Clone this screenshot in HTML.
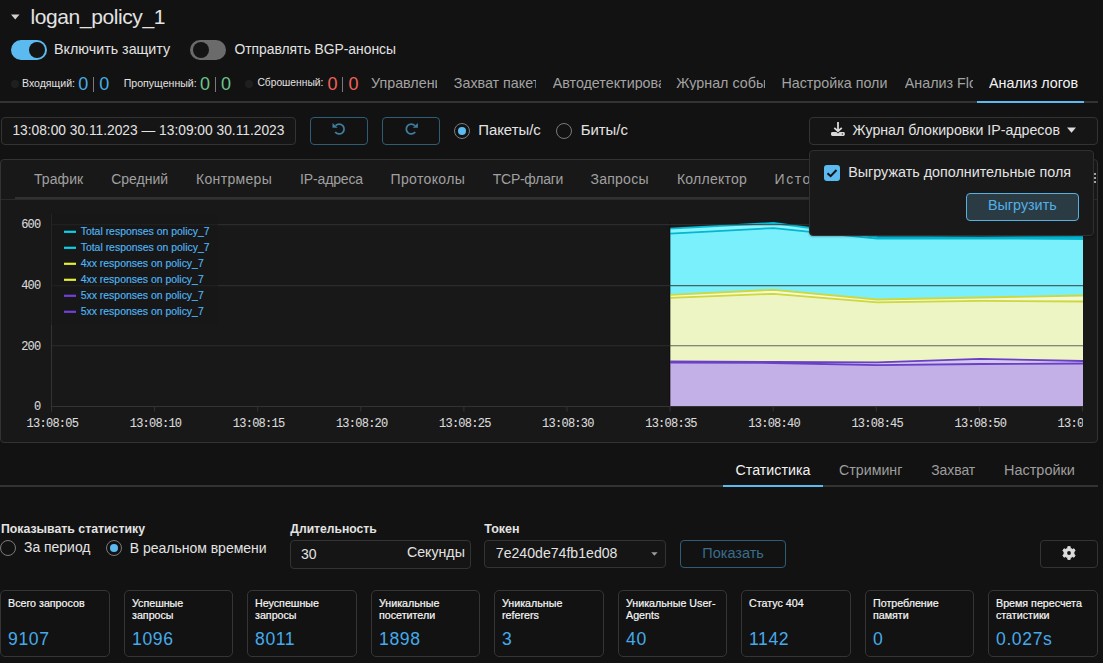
<!DOCTYPE html>
<html><head><meta charset="utf-8"><style>
html,body{margin:0;padding:0;width:1103px;height:663px;overflow:hidden;background:#121212;font-family:'Liberation Sans', sans-serif;}
.t{position:absolute;white-space:nowrap;line-height:1;}
</style></head><body>
<svg style="position:absolute;left:10px;top:13px" width="11" height="8"><path d="M1 1.5 L9.5 1.5 L5.25 6.5 Z" fill="#cfcfcf"/></svg>
<div class="t" style="left:30.5px;top:6.22px;font-size:21px;color:#e3e3e3;font-weight:normal;font-family:'Liberation Sans', sans-serif;letter-spacing:-0.401px;">logan_policy_1</div>
<div style="position:absolute;left:11px;top:40px;width:36px;height:20px;box-sizing:border-box;background:#5bbbf0;border-radius:10px"></div>
<div style="position:absolute;left:29px;top:42px;width:16px;height:16px;box-sizing:border-box;background:#141414;border-radius:50%"></div>
<div class="t" style="left:54px;top:41.70px;font-size:14.3px;color:#e3e3e3;font-weight:normal;font-family:'Liberation Sans', sans-serif;">Включить защиту</div>
<div style="position:absolute;left:190px;top:40px;width:36px;height:20px;box-sizing:border-box;background:#6b6b6b;border-radius:10px"></div>
<div style="position:absolute;left:193px;top:42px;width:16px;height:16px;box-sizing:border-box;background:#141414;border-radius:50%"></div>
<div class="t" style="left:234.5px;top:42.88px;font-size:13.85px;color:#e3e3e3;font-weight:normal;font-family:'Liberation Sans', sans-serif;">Отправлять BGP-анонсы</div>
<div style="position:absolute;left:11px;top:79.5px;width:8px;height:8px;box-sizing:border-box;background:#1f1f1f;border-radius:50%"></div>
<div class="t" style="left:22px;top:78.07px;font-size:10.55px;color:#e3e3e3;font-weight:normal;font-family:'Liberation Sans', sans-serif;">Входящий:</div>
<div class="t" style="left:78.2px;top:74.86px;font-size:18px;color:#46aee6;font-weight:normal;font-family:'Liberation Sans', sans-serif;">0</div>
<div style="position:absolute;left:92.9px;top:76.5px;width:1.3px;height:15.5px;box-sizing:border-box;background:#7a7a7a"></div>
<div class="t" style="left:99.2px;top:74.86px;font-size:18px;color:#46aee6;font-weight:normal;font-family:'Liberation Sans', sans-serif;">0</div>
<div class="t" style="left:123.7px;top:78.04px;font-size:10.58px;color:#e3e3e3;font-weight:normal;font-family:'Liberation Sans', sans-serif;">Пропущенный:</div>
<div class="t" style="left:200.1px;top:74.86px;font-size:18px;color:#6cc48c;font-weight:normal;font-family:'Liberation Sans', sans-serif;">0</div>
<div style="position:absolute;left:214.8px;top:76.5px;width:1.3px;height:15.5px;box-sizing:border-box;background:#7a7a7a"></div>
<div class="t" style="left:221.1px;top:74.86px;font-size:18px;color:#6cc48c;font-weight:normal;font-family:'Liberation Sans', sans-serif;">0</div>
<div style="position:absolute;left:245px;top:79.5px;width:8px;height:8px;box-sizing:border-box;background:#1f1f1f;border-radius:50%"></div>
<div class="t" style="left:257.4px;top:78.31px;font-size:10.27px;color:#e3e3e3;font-weight:normal;font-family:'Liberation Sans', sans-serif;">Сброшенный:</div>
<div class="t" style="left:327.5px;top:74.86px;font-size:18px;color:#ef625a;font-weight:normal;font-family:'Liberation Sans', sans-serif;">0</div>
<div style="position:absolute;left:342.2px;top:76.5px;width:1.3px;height:15.5px;box-sizing:border-box;background:#7a7a7a"></div>
<div class="t" style="left:348.5px;top:74.86px;font-size:18px;color:#ef625a;font-weight:normal;font-family:'Liberation Sans', sans-serif;">0</div>
<div class="t" style="left:371px;top:75.90px;font-size:14.3px;color:#a3a3a3;font-weight:normal;font-family:'Liberation Sans', sans-serif;width:66px;overflow:hidden">Управление</div>
<div class="t" style="left:453.8px;top:75.90px;font-size:14.3px;color:#a3a3a3;font-weight:normal;font-family:'Liberation Sans', sans-serif;width:82px;overflow:hidden">Захват пакетов</div>
<div class="t" style="left:552.7px;top:75.90px;font-size:14.3px;color:#a3a3a3;font-weight:normal;font-family:'Liberation Sans', sans-serif;width:108px;overflow:hidden">Автодетектирование</div>
<div class="t" style="left:676.3px;top:75.90px;font-size:14.3px;color:#a3a3a3;font-weight:normal;font-family:'Liberation Sans', sans-serif;width:89px;overflow:hidden">Журнал событий</div>
<div class="t" style="left:781.4px;top:75.90px;font-size:14.3px;color:#a3a3a3;font-weight:normal;font-family:'Liberation Sans', sans-serif;width:106px;overflow:hidden">Настройка политики</div>
<div class="t" style="left:904.8px;top:75.90px;font-size:14.3px;color:#a3a3a3;font-weight:normal;font-family:'Liberation Sans', sans-serif;width:68px;overflow:hidden">Анализ Flow</div>
<div class="t" style="left:989px;top:75.90px;font-size:14.3px;color:#f2f2f2;font-weight:normal;font-family:'Liberation Sans', sans-serif;width:95px;overflow:hidden">Анализ логов</div>
<div style="position:absolute;left:0px;top:101px;width:1098px;height:2px;box-sizing:border-box;background:#333"></div>
<div style="position:absolute;left:977px;top:101px;width:107px;height:2px;box-sizing:border-box;background:#5bbbf0"></div>
<div style="position:absolute;left:1px;top:117px;width:295px;height:28px;box-sizing:border-box;border:1px solid #333;border-radius:4px;background:#151515"></div>
<div class="t" style="left:12.4px;top:123.54px;font-size:13.77px;color:#e3e3e3;font-weight:normal;font-family:'Liberation Sans', sans-serif;">13:08:00 30.11.2023 — 13:09:00 30.11.2023</div>
<div style="position:absolute;left:310px;top:117px;width:58px;height:28px;box-sizing:border-box;border:1px solid #2f5d75;border-radius:4px"></div>
<div style="position:absolute;left:382px;top:117px;width:58px;height:28px;box-sizing:border-box;border:1px solid #2f5d75;border-radius:4px"></div>
<svg style="position:absolute;left:328px;top:119px" width="20" height="20" viewBox="0 0 20 20"><path d="M7.6 6.7 A4.9 4.9 0 1 1 7.2 12.9" fill="none" stroke="#3f7d9f" stroke-width="1.75"/><path d="M4.5 3.9 L4.5 8.7 L9.7 8.7 Z" fill="#3f7d9f"/></svg>
<svg style="position:absolute;left:400px;top:119px" width="20" height="20" viewBox="0 0 20 20"><g transform="translate(22.4,0) scale(-1,1)"><path d="M7.6 6.7 A4.9 4.9 0 1 1 7.2 12.9" fill="none" stroke="#3f7d9f" stroke-width="1.75"/><path d="M4.5 3.9 L4.5 8.7 L9.7 8.7 Z" fill="#3f7d9f"/></g></svg>
<div style="position:absolute;left:454px;top:123px;width:16px;height:16px;box-sizing:border-box;border:1.5px solid #7a7a7a;border-radius:50%"></div>
<div style="position:absolute;left:458px;top:127px;width:8px;height:8px;box-sizing:border-box;background:#5bbbf0;border-radius:50%"></div>
<div class="t" style="left:478.2px;top:123.39px;font-size:14.9px;color:#e3e3e3;font-weight:normal;font-family:'Liberation Sans', sans-serif;">Пакеты/с</div>
<div style="position:absolute;left:556px;top:123px;width:16px;height:16px;box-sizing:border-box;border:1.5px solid #7a7a7a;border-radius:50%"></div>
<div class="t" style="left:580.7px;top:123.39px;font-size:14.9px;color:#e3e3e3;font-weight:normal;font-family:'Liberation Sans', sans-serif;">Биты/с</div>
<div style="position:absolute;left:809px;top:117px;width:289px;height:28px;box-sizing:border-box;border:1px solid #333;border-radius:4px;background:#151515"></div>
<svg style="position:absolute;left:826px;top:118px" width="24" height="24" viewBox="0 0 24 24"><rect x="5" y="14" width="13.8" height="3.9" rx="1.4" fill="#d9d9d9"/><path d="M8.3 9.9 L12 13.2 L15.8 9.9" fill="none" stroke="#121212" stroke-width="3.4"/><path d="M12 4 V12.4 M8.3 9.9 L12 13.2 L15.8 9.9" fill="none" stroke="#d9d9d9" stroke-width="1.8"/><circle cx="16.4" cy="15.9" r="0.75" fill="#333"/></svg>
<div class="t" style="left:852.6px;top:123.01px;font-size:14.17px;color:#e3e3e3;font-weight:normal;font-family:'Liberation Sans', sans-serif;">Журнал блокировки IP-адресов</div>
<svg style="position:absolute;left:1066px;top:127px" width="12" height="8"><path d="M1 0.4 L10 0.4 L5.5 5.7 Z" fill="#dcdcdc"/></svg>
<div style="position:absolute;left:0px;top:159px;width:1098px;height:284px;box-sizing:border-box;border:1px solid #333;border-radius:4px;background:#181818"></div>
<div class="t" style="left:34.0px;top:172.15px;font-size:14px;color:#a0a0a0;font-weight:normal;font-family:'Liberation Sans', sans-serif;letter-spacing:0.081px;">Трафик</div>
<div class="t" style="left:111.2px;top:172.15px;font-size:14px;color:#a0a0a0;font-weight:normal;font-family:'Liberation Sans', sans-serif;letter-spacing:-0.017px;">Средний</div>
<div class="t" style="left:196.0px;top:172.15px;font-size:14px;color:#a0a0a0;font-weight:normal;font-family:'Liberation Sans', sans-serif;letter-spacing:0.329px;">Контрмеры</div>
<div class="t" style="left:300.1px;top:172.15px;font-size:14px;color:#a0a0a0;font-weight:normal;font-family:'Liberation Sans', sans-serif;letter-spacing:-0.145px;">IP-адреса</div>
<div class="t" style="left:390.5px;top:172.15px;font-size:14px;color:#a0a0a0;font-weight:normal;font-family:'Liberation Sans', sans-serif;letter-spacing:0.358px;">Протоколы</div>
<div class="t" style="left:492.8px;top:172.15px;font-size:14px;color:#a0a0a0;font-weight:normal;font-family:'Liberation Sans', sans-serif;letter-spacing:-0.285px;">TCP-флаги</div>
<div class="t" style="left:590.5px;top:172.15px;font-size:14px;color:#a0a0a0;font-weight:normal;font-family:'Liberation Sans', sans-serif;letter-spacing:0.247px;">Запросы</div>
<div class="t" style="left:676.9px;top:172.15px;font-size:14px;color:#a0a0a0;font-weight:normal;font-family:'Liberation Sans', sans-serif;letter-spacing:0.258px;">Коллектор</div>
<div class="t" style="left:774.6px;top:172.15px;font-size:14px;color:#a0a0a0;font-weight:normal;font-family:'Liberation Sans', sans-serif;letter-spacing:1.490px;">Источники</div>
<div style="position:absolute;left:1px;top:199px;width:1096px;height:1px;box-sizing:border-box;background:#2a2a2a"></div>
<div style="position:absolute;left:15px;top:197px;width:1078px;height:2px;box-sizing:border-box;background:#313131"></div>
<svg style="position:absolute;left:0;top:0" width="1103" height="663" viewBox="0 0 1103 663"><defs><clipPath id="pc"><rect x="52" y="160" width="1031" height="260"/></clipPath></defs><g clip-path="url(#pc)"><polygon points="670.2,228.7 773.5,223 877.2,237 980.3,237.3 1084,237 1084,239 980.3,238.5 877.2,238.6 773.5,228.1 670.2,233.6" fill="#8af4fe"/><polygon points="670.2,233.6 773.5,228.1 877.2,238.6 980.3,238.5 1084,239 1084,295.5 980.3,297.5 877.2,299.5 773.5,289.8 670.2,294.8" fill="#7af0fc"/><polygon points="670.2,294.8 773.5,289.8 877.2,299.5 980.3,297.5 1084,295.5 1084,301.5 980.3,300.8 877.2,302.3 773.5,293.8 670.2,297.8" fill="#f4f8d8"/><polygon points="670.2,297.8 773.5,293.8 877.2,302.3 980.3,300.8 1084,301.5 1084,361 980.3,358.8 877.2,362.3 773.5,362 670.2,361.3" fill="#eef5c4"/><polygon points="670.2,361.3 773.5,362 877.2,362.3 980.3,358.8 1084,361 1084,363.5 980.3,364 877.2,365.2 773.5,363 670.2,362.6" fill="#d2c6ee"/><polygon points="670.2,362.6 773.5,363 877.2,365.2 980.3,364 1084,363.5 1084,406.5 670.2,406.5" fill="#c2b0e6"/><polyline points="670.2,228.7 773.5,223 877.2,237 980.3,237.3 1084,237" fill="none" stroke="#06bcd6" stroke-width="1.8"/><polyline points="670.2,233.6 773.5,228.1 877.2,238.6 980.3,238.5 1084,239" fill="none" stroke="#06b6d0" stroke-width="1.8"/><polyline points="670.2,294.8 773.5,289.8 877.2,299.5 980.3,297.5 1084,295.5" fill="none" stroke="#cdd83c" stroke-width="1.8"/><polyline points="670.2,297.8 773.5,293.8 877.2,302.3 980.3,300.8 1084,301.5" fill="none" stroke="#cdd83c" stroke-width="1.8"/><polyline points="670.2,361.3 773.5,362 877.2,362.3 980.3,358.8 1084,361" fill="none" stroke="#6a40c6" stroke-width="1.8"/><polyline points="670.2,362.6 773.5,363 877.2,365.2 980.3,364 1084,363.5" fill="none" stroke="#6a40c6" stroke-width="1.8"/><line x1="669.7" y1="222" x2="669.7" y2="406.5" stroke="#101010" stroke-width="1"/></g><line x1="52" y1="224.6" x2="1083" y2="224.6" stroke="#333" stroke-opacity="0.75" stroke-width="1.1"/><line x1="52" y1="285.6" x2="1083" y2="285.6" stroke="#333" stroke-opacity="0.75" stroke-width="1.1"/><line x1="52" y1="345.8" x2="1083" y2="345.8" stroke="#333" stroke-opacity="0.75" stroke-width="1.1"/><line x1="51.5" y1="214" x2="51.5" y2="411.5" stroke="#333" stroke-width="1"/><line x1="52" y1="406.5" x2="1083" y2="406.5" stroke="#333" stroke-width="1"/><line x1="51.5" y1="406.5" x2="51.5" y2="411.5" stroke="#333" stroke-width="1"/><line x1="154.6" y1="406.5" x2="154.6" y2="411.5" stroke="#333" stroke-width="1"/><line x1="257.7" y1="406.5" x2="257.7" y2="411.5" stroke="#333" stroke-width="1"/><line x1="360.8" y1="406.5" x2="360.8" y2="411.5" stroke="#333" stroke-width="1"/><line x1="463.9" y1="406.5" x2="463.9" y2="411.5" stroke="#333" stroke-width="1"/><line x1="567.0" y1="406.5" x2="567.0" y2="411.5" stroke="#333" stroke-width="1"/><line x1="670.1" y1="406.5" x2="670.1" y2="411.5" stroke="#333" stroke-width="1"/><line x1="773.2" y1="406.5" x2="773.2" y2="411.5" stroke="#333" stroke-width="1"/><line x1="876.3" y1="406.5" x2="876.3" y2="411.5" stroke="#333" stroke-width="1"/><line x1="979.4" y1="406.5" x2="979.4" y2="411.5" stroke="#333" stroke-width="1"/><line x1="1082.5" y1="406.5" x2="1082.5" y2="411.5" stroke="#333" stroke-width="1"/><rect x="50" y="214" width="168" height="111" fill="#181818" fill-opacity="0.55"/><rect x="64" y="230.7" width="12" height="2.2" fill="#0cd0e8"/><rect x="64" y="246.7" width="12" height="2.2" fill="#0cd0e8"/><rect x="64" y="262.7" width="12" height="2.2" fill="#e4ec3c"/><rect x="64" y="278.7" width="12" height="2.2" fill="#e4ec3c"/><rect x="64" y="294.7" width="12" height="2.2" fill="#7040d8"/><rect x="64" y="310.7" width="12" height="2.2" fill="#7040d8"/></svg>
<div class="t" style="left:80.7px;top:227.15px;font-size:10.45px;color:#50b5f4;font-weight:normal;font-family:'Liberation Sans', sans-serif;-webkit-text-stroke:0.15px #50b5f4">Total responses on policy_7</div>
<div class="t" style="left:80.7px;top:243.15px;font-size:10.45px;color:#50b5f4;font-weight:normal;font-family:'Liberation Sans', sans-serif;-webkit-text-stroke:0.15px #50b5f4">Total responses on policy_7</div>
<div class="t" style="left:80.7px;top:259.15px;font-size:10.45px;color:#50b5f4;font-weight:normal;font-family:'Liberation Sans', sans-serif;-webkit-text-stroke:0.15px #50b5f4">4xx responses on policy_7</div>
<div class="t" style="left:80.7px;top:275.15px;font-size:10.45px;color:#50b5f4;font-weight:normal;font-family:'Liberation Sans', sans-serif;-webkit-text-stroke:0.15px #50b5f4">4xx responses on policy_7</div>
<div class="t" style="left:80.7px;top:291.15px;font-size:10.45px;color:#50b5f4;font-weight:normal;font-family:'Liberation Sans', sans-serif;-webkit-text-stroke:0.15px #50b5f4">5xx responses on policy_7</div>
<div class="t" style="left:80.7px;top:307.15px;font-size:10.45px;color:#50b5f4;font-weight:normal;font-family:'Liberation Sans', sans-serif;-webkit-text-stroke:0.15px #50b5f4">5xx responses on policy_7</div>
<div class="t" style="left:0px;width:40.5px;text-align:right;top:219.31px;font-size:12px;letter-spacing:-0.75px;color:#dadada;font-family:'Liberation Mono', monospace;-webkit-text-stroke:0.1px #dadada">600</div>
<div class="t" style="left:0px;width:40.5px;text-align:right;top:280.21px;font-size:12px;letter-spacing:-0.75px;color:#dadada;font-family:'Liberation Mono', monospace;-webkit-text-stroke:0.1px #dadada">400</div>
<div class="t" style="left:0px;width:40.5px;text-align:right;top:340.61px;font-size:12px;letter-spacing:-0.75px;color:#dadada;font-family:'Liberation Mono', monospace;-webkit-text-stroke:0.1px #dadada">200</div>
<div class="t" style="left:0px;width:40.5px;text-align:right;top:401.11px;font-size:12px;letter-spacing:-0.75px;color:#dadada;font-family:'Liberation Mono', monospace;-webkit-text-stroke:0.1px #dadada">0</div>
<div style="position:absolute;left:0;top:412px;width:1083px;height:22px;overflow:hidden"><div class="t" style="left:12.4px;width:80px;text-align:center;top:5.91px;font-size:12px;letter-spacing:-0.75px;color:#dadada;font-family:'Liberation Mono', monospace;-webkit-text-stroke:0.1px #dadada">13:08:05</div><div class="t" style="left:115.5px;width:80px;text-align:center;top:5.91px;font-size:12px;letter-spacing:-0.75px;color:#dadada;font-family:'Liberation Mono', monospace;-webkit-text-stroke:0.1px #dadada">13:08:10</div><div class="t" style="left:218.6px;width:80px;text-align:center;top:5.91px;font-size:12px;letter-spacing:-0.75px;color:#dadada;font-family:'Liberation Mono', monospace;-webkit-text-stroke:0.1px #dadada">13:08:15</div><div class="t" style="left:321.7px;width:80px;text-align:center;top:5.91px;font-size:12px;letter-spacing:-0.75px;color:#dadada;font-family:'Liberation Mono', monospace;-webkit-text-stroke:0.1px #dadada">13:08:20</div><div class="t" style="left:424.8px;width:80px;text-align:center;top:5.91px;font-size:12px;letter-spacing:-0.75px;color:#dadada;font-family:'Liberation Mono', monospace;-webkit-text-stroke:0.1px #dadada">13:08:25</div><div class="t" style="left:527.9px;width:80px;text-align:center;top:5.91px;font-size:12px;letter-spacing:-0.75px;color:#dadada;font-family:'Liberation Mono', monospace;-webkit-text-stroke:0.1px #dadada">13:08:30</div><div class="t" style="left:631.0px;width:80px;text-align:center;top:5.91px;font-size:12px;letter-spacing:-0.75px;color:#dadada;font-family:'Liberation Mono', monospace;-webkit-text-stroke:0.1px #dadada">13:08:35</div><div class="t" style="left:734.1px;width:80px;text-align:center;top:5.91px;font-size:12px;letter-spacing:-0.75px;color:#dadada;font-family:'Liberation Mono', monospace;-webkit-text-stroke:0.1px #dadada">13:08:40</div><div class="t" style="left:837.2px;width:80px;text-align:center;top:5.91px;font-size:12px;letter-spacing:-0.75px;color:#dadada;font-family:'Liberation Mono', monospace;-webkit-text-stroke:0.1px #dadada">13:08:45</div><div class="t" style="left:940.3px;width:80px;text-align:center;top:5.91px;font-size:12px;letter-spacing:-0.75px;color:#dadada;font-family:'Liberation Mono', monospace;-webkit-text-stroke:0.1px #dadada">13:08:50</div><div class="t" style="left:1043.4px;width:80px;text-align:center;top:5.91px;font-size:12px;letter-spacing:-0.75px;color:#dadada;font-family:'Liberation Mono', monospace;-webkit-text-stroke:0.1px #dadada">13:08:55</div></div>
<div style="position:absolute;left:1094px;top:172.7px;width:2px;height:2px;box-sizing:border-box;background:#a8a8a8"></div>
<div style="position:absolute;left:1094px;top:177.1px;width:2px;height:2px;box-sizing:border-box;background:#a8a8a8"></div>
<div style="position:absolute;left:1094px;top:181.4px;width:2px;height:2px;box-sizing:border-box;background:#a8a8a8"></div>
<div style="position:absolute;left:809px;top:150px;width:285px;height:86px;box-sizing:border-box;background:#191919;border:1px solid #303030;border-radius:4px;box-shadow:0 1px 2px rgba(0,0,0,0.25)"></div>
<div style="position:absolute;left:824px;top:165px;width:16px;height:16px;box-sizing:border-box;background:#5bbbf0;border-radius:3px"></div>
<svg style="position:absolute;left:824px;top:165px" width="16" height="16"><path d="M3.5 8.2 L6.6 11.2 L12.5 5" fill="none" stroke="#111" stroke-width="2"/></svg>
<div class="t" style="left:848.2px;top:165.17px;font-size:14.33px;color:#e3e3e3;font-weight:normal;font-family:'Liberation Sans', sans-serif;">Выгружать дополнительные поля</div>
<div style="position:absolute;left:966px;top:193px;width:113px;height:28px;box-sizing:border-box;background:#2b3b44;border:1px solid #56b0e0;border-radius:4px"></div>
<div class="t" style="left:988px;top:198.46px;font-size:14.34px;color:#52b0e8;font-weight:normal;font-family:'Liberation Sans', sans-serif;">Выгрузить</div>
<div class="t" style="left:735.6px;top:463.25px;font-size:14.24px;color:#f2f2f2;font-weight:normal;font-family:'Liberation Sans', sans-serif;">Статистика</div>
<div class="t" style="left:839.1px;top:463.28px;font-size:14.2px;color:#9e9e9e;font-weight:normal;font-family:'Liberation Sans', sans-serif;">Стриминг</div>
<div class="t" style="left:931.2px;top:463.56px;font-size:13.87px;color:#9e9e9e;font-weight:normal;font-family:'Liberation Sans', sans-serif;">Захват</div>
<div class="t" style="left:1004px;top:463.04px;font-size:14.48px;color:#9e9e9e;font-weight:normal;font-family:'Liberation Sans', sans-serif;">Настройки</div>
<div style="position:absolute;left:0px;top:485px;width:1098px;height:2px;box-sizing:border-box;background:#333"></div>
<div style="position:absolute;left:723px;top:485px;width:100px;height:2px;box-sizing:border-box;background:#5bbbf0"></div>
<div class="t" style="left:1px;top:522.89px;font-size:12.3px;color:#e3e3e3;font-weight:bold;font-family:'Liberation Sans', sans-serif;">Показывать статистику</div>
<div style="position:absolute;left:0px;top:540px;width:16px;height:16px;box-sizing:border-box;border:1.5px solid #7a7a7a;border-radius:50%"></div>
<div class="t" style="left:24px;top:540.80px;font-size:13.94px;color:#e3e3e3;font-weight:normal;font-family:'Liberation Sans', sans-serif;">За период</div>
<div style="position:absolute;left:106px;top:540px;width:16px;height:16px;box-sizing:border-box;border:1.5px solid #7a7a7a;border-radius:50%"></div>
<div style="position:absolute;left:110px;top:544px;width:8px;height:8px;box-sizing:border-box;background:#5bbbf0;border-radius:50%"></div>
<div class="t" style="left:129.7px;top:540.76px;font-size:13.99px;color:#e3e3e3;font-weight:normal;font-family:'Liberation Sans', sans-serif;">В реальном времени</div>
<div class="t" style="left:290.3px;top:523.02px;font-size:12.15px;color:#e3e3e3;font-weight:bold;font-family:'Liberation Sans', sans-serif;">Длительность</div>
<div style="position:absolute;left:290px;top:540px;width:181px;height:29px;box-sizing:border-box;border:1px solid #333;border-radius:4px;background:#151515"></div>
<div class="t" style="left:301px;top:546.75px;font-size:14px;color:#e3e3e3;font-weight:normal;font-family:'Liberation Sans', sans-serif;">30</div>
<div class="t" style="left:406.9px;top:545.17px;font-size:14.21px;color:#e3e3e3;font-weight:normal;font-family:'Liberation Sans', sans-serif;">Секунды</div>
<div class="t" style="left:484.3px;top:522.72px;font-size:12.5px;color:#e3e3e3;font-weight:bold;font-family:'Liberation Sans', sans-serif;">Токен</div>
<div style="position:absolute;left:484px;top:540px;width:182px;height:28px;box-sizing:border-box;border:1px solid #333;border-radius:4px;background:#151515"></div>
<div class="t" style="left:495.8px;top:546.35px;font-size:14.12px;color:#e3e3e3;font-weight:normal;font-family:'Liberation Sans', sans-serif;">7e240de74fb1ed08</div>
<svg style="position:absolute;left:650px;top:551px" width="9" height="6"><path d="M1.2 1.2 L7.6 1.2 L4.4 4.8 Z" fill="#9c9c9c"/></svg>
<div style="position:absolute;left:680px;top:540px;width:106px;height:28px;box-sizing:border-box;border:1px solid #2f5d75;border-radius:4px"></div>
<div class="t" style="left:702.3px;top:546.05px;font-size:14.47px;color:#396d8b;font-weight:normal;font-family:'Liberation Sans', sans-serif;">Показать</div>
<div style="position:absolute;left:1040px;top:540px;width:58px;height:28px;box-sizing:border-box;border:1px solid #333;border-radius:4px"></div>
<svg style="position:absolute;left:1059px;top:543px" width="20" height="20" viewBox="0 0 20 20"><path fill-rule="evenodd" fill="#dcdcdc" stroke="#dcdcdc" stroke-width="0.8" stroke-linejoin="round" d="M7.50 5.67 L8.54 5.22 L8.85 3.50 L11.15 3.50 L11.46 5.22 L12.50 5.67 L13.41 6.34 L15.06 5.76 L16.20 7.74 L14.87 8.88 L15.00 10.00 L14.87 11.12 L16.20 12.26 L15.06 14.24 L13.41 13.66 L12.50 14.33 L11.46 14.78 L11.15 16.50 L8.85 16.50 L8.54 14.78 L7.50 14.33 L6.59 13.66 L4.94 14.24 L3.80 12.26 L5.13 11.12 L5.00 10.00 L5.13 8.88 L3.80 7.74 L4.94 5.76 L6.59 6.34 Z"/><circle cx="10" cy="10" r="1.9" fill="#121212"/></svg>
<div style="position:absolute;left:0px;top:590px;width:110px;height:67px;box-sizing:border-box;border:1px solid #353535;border-radius:5px"></div>
<div class="t" style="left:8px;top:596.84px;font-size:10.7px;line-height:12.5px;color:#f6f6f6;-webkit-text-stroke:0.2px #f6f6f6">Всего запросов</div>
<div class="t" style="left:8px;top:630.50px;font-size:17.6px;color:#45aaea;font-weight:normal;font-family:'Liberation Sans', sans-serif;letter-spacing:0.6px">9107</div>
<div style="position:absolute;left:124px;top:590px;width:109px;height:67px;box-sizing:border-box;border:1px solid #353535;border-radius:5px"></div>
<div class="t" style="left:132px;top:596.84px;font-size:10.7px;line-height:12.5px;color:#f6f6f6;-webkit-text-stroke:0.2px #f6f6f6">Успешные<br>запросы</div>
<div class="t" style="left:132px;top:630.50px;font-size:17.6px;color:#45aaea;font-weight:normal;font-family:'Liberation Sans', sans-serif;letter-spacing:0.6px">1096</div>
<div style="position:absolute;left:247px;top:590px;width:110px;height:67px;box-sizing:border-box;border:1px solid #353535;border-radius:5px"></div>
<div class="t" style="left:255px;top:596.84px;font-size:10.7px;line-height:12.5px;color:#f6f6f6;-webkit-text-stroke:0.2px #f6f6f6">Неуспешные<br>запросы</div>
<div class="t" style="left:255px;top:630.50px;font-size:17.6px;color:#45aaea;font-weight:normal;font-family:'Liberation Sans', sans-serif;letter-spacing:0.6px">8011</div>
<div style="position:absolute;left:371px;top:590px;width:109px;height:67px;box-sizing:border-box;border:1px solid #353535;border-radius:5px"></div>
<div class="t" style="left:379px;top:596.84px;font-size:10.7px;line-height:12.5px;color:#f6f6f6;-webkit-text-stroke:0.2px #f6f6f6">Уникальные<br>посетители</div>
<div class="t" style="left:379px;top:630.50px;font-size:17.6px;color:#45aaea;font-weight:normal;font-family:'Liberation Sans', sans-serif;letter-spacing:0.6px">1898</div>
<div style="position:absolute;left:494px;top:590px;width:110px;height:67px;box-sizing:border-box;border:1px solid #353535;border-radius:5px"></div>
<div class="t" style="left:502px;top:596.84px;font-size:10.7px;line-height:12.5px;color:#f6f6f6;-webkit-text-stroke:0.2px #f6f6f6">Уникальные<br>referers</div>
<div class="t" style="left:502px;top:630.50px;font-size:17.6px;color:#45aaea;font-weight:normal;font-family:'Liberation Sans', sans-serif;letter-spacing:0.6px">3</div>
<div style="position:absolute;left:618px;top:590px;width:109px;height:67px;box-sizing:border-box;border:1px solid #353535;border-radius:5px"></div>
<div class="t" style="left:626px;top:596.84px;font-size:10.7px;line-height:12.5px;color:#f6f6f6;-webkit-text-stroke:0.2px #f6f6f6">Уникальные User-<br>Agents</div>
<div class="t" style="left:626px;top:630.50px;font-size:17.6px;color:#45aaea;font-weight:normal;font-family:'Liberation Sans', sans-serif;letter-spacing:0.6px">40</div>
<div style="position:absolute;left:741px;top:590px;width:110px;height:67px;box-sizing:border-box;border:1px solid #353535;border-radius:5px"></div>
<div class="t" style="left:749px;top:596.84px;font-size:10.7px;line-height:12.5px;color:#f6f6f6;-webkit-text-stroke:0.2px #f6f6f6">Статус 404</div>
<div class="t" style="left:749px;top:630.50px;font-size:17.6px;color:#45aaea;font-weight:normal;font-family:'Liberation Sans', sans-serif;letter-spacing:0.6px">1142</div>
<div style="position:absolute;left:865px;top:590px;width:109px;height:67px;box-sizing:border-box;border:1px solid #353535;border-radius:5px"></div>
<div class="t" style="left:873px;top:596.84px;font-size:10.7px;line-height:12.5px;color:#f6f6f6;-webkit-text-stroke:0.2px #f6f6f6">Потребление<br>памяти</div>
<div class="t" style="left:873px;top:630.50px;font-size:17.6px;color:#45aaea;font-weight:normal;font-family:'Liberation Sans', sans-serif;letter-spacing:0.6px">0</div>
<div style="position:absolute;left:988px;top:590px;width:110px;height:67px;box-sizing:border-box;border:1px solid #353535;border-radius:5px"></div>
<div class="t" style="left:996px;top:596.84px;font-size:10.7px;line-height:12.5px;color:#f6f6f6;-webkit-text-stroke:0.2px #f6f6f6">Время пересчета<br>статистики</div>
<div class="t" style="left:996px;top:630.50px;font-size:17.6px;color:#45aaea;font-weight:normal;font-family:'Liberation Sans', sans-serif;letter-spacing:0.6px">0.027s</div>
</body></html>
